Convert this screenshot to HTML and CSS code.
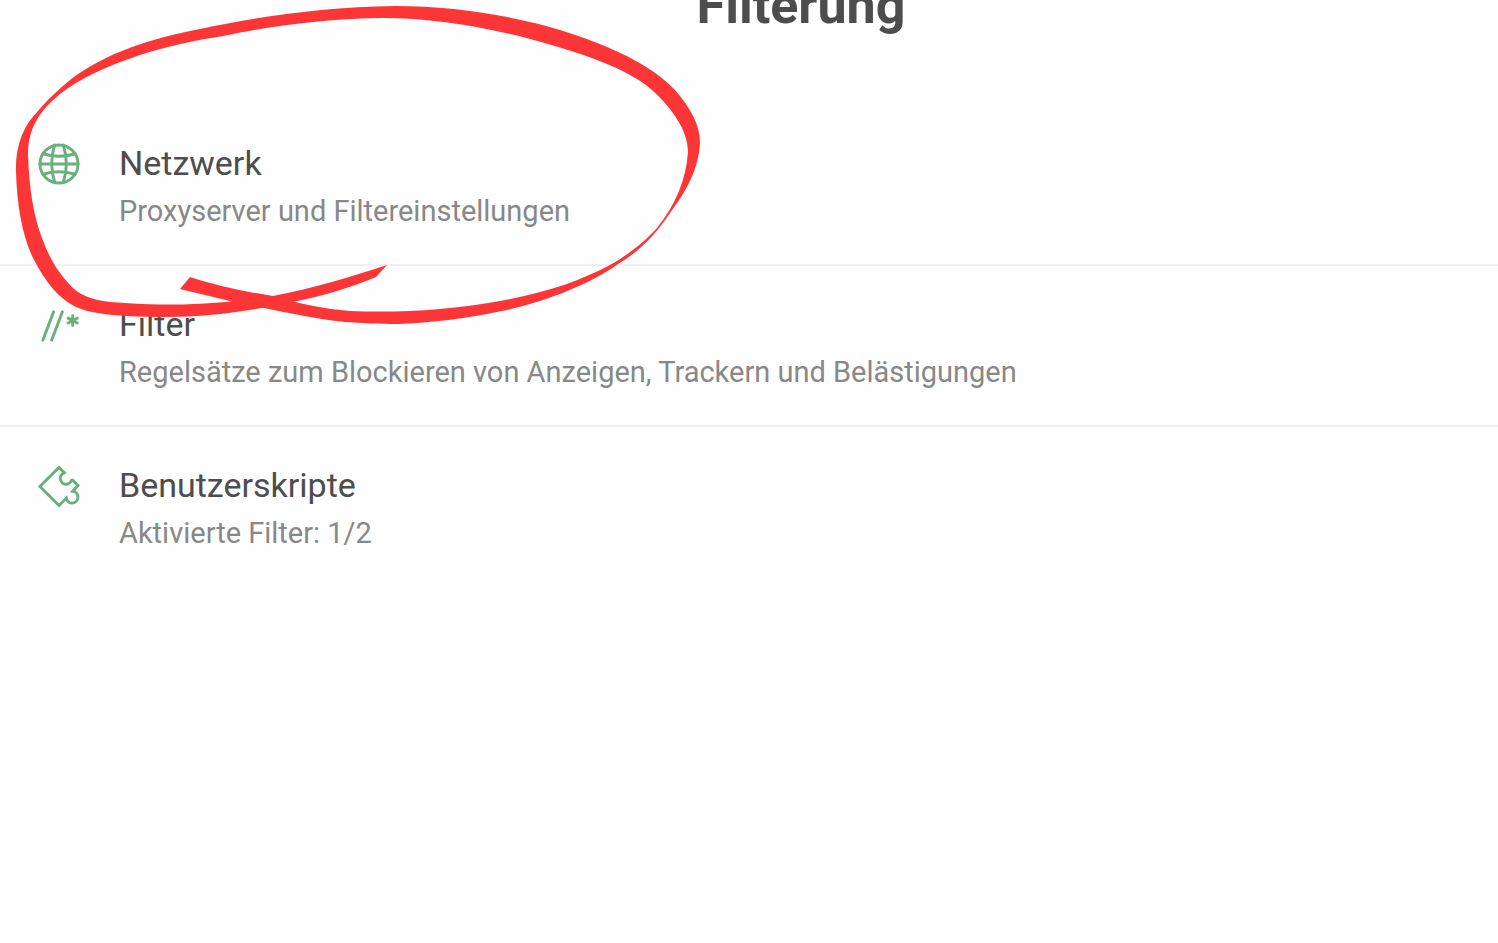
FILE: index.html
```html
<!DOCTYPE html>
<html lang="de">
<head>
    <meta charset="UTF-8">
    <meta name="viewport" content="width=device-width, initial-scale=1.0">
    <title>Filterung</title>
    <link rel="stylesheet" href="styles.css">
</head>
<body>
<header class="header">
    <h1>Filterung</h1>
</header>

<main>
    <ul class="settings">
        <li>
            <a class="setting" href="#netzwerk">
                <svg class="icon" viewBox="0 0 43 43" aria-hidden="true">
                    <circle cx="21.500" cy="21.500" r="19.500"/>
                    <path d="M2 21.500H41M5 11Q21.500 16 38 11M5 32Q21.500 27 38 32M17 2Q11 21.500 17 40M26 2Q32 21.500 26 40"/>
                </svg>
                <div class="setting-info">
                    <h2>Netzwerk</h2>
                    <p>Proxyserver und Filtereinstellungen</p>
                </div>
            </a>
        </li>
        <li>
            <a class="setting" href="#filter">
                <svg class="icon" viewBox="0 0 43 43" aria-hidden="true">
                    <path d="M16 8L5 37M25 8L14 37M35.500 12V22M30.800 14.500L40.200 19.500M40.200 14.500L30.800 19.500"/>
                </svg>
                <div class="setting-info">
                    <h2>Filter</h2>
                    <p>Regelsätze zum Blockieren von Anzeigen, Trackern und Belästigungen</p>
                </div>
            </a>
        </li>
        <li>
            <a class="setting" href="#benutzerskripte">
                <svg class="icon" viewBox="0 0 43 43" aria-hidden="true">
                    <path d="M21.500 2.500L27 8L24.500 9.500A6 6 0 1 0 34.500 15.500L35.500 15.500L41 21L35.500 27A6 6 0 1 1 29 34L21.500 41.500L2 22Z"/>
                </svg>
                <div class="setting-info">
                    <h2>Benutzerskripte</h2>
                    <p>Aktivierte Filter: 1/2</p>
                </div>
            </a>
        </li>
    </ul>
</main>

<!-- Markierung -->
<svg class="marker" viewBox="0 0 720 340" aria-hidden="true">
    <path d="M190 277C215 285 240 291 273 296C300 304 325 309 350 311C400 313 450 310 500 301
        C545 293 580 281 610 265C630 254 646 240 657 228C676 204 686 180 688 152
        C688 132 674 110 652 90C628 68 575 51 530 39C480 26 430 18 383 18
        C330 18 270 26 223 36C195 40 165 47 140 55C110 65 80 78 60 94
        C38 112 28 130 28 155C29 185 33 215 42 238C50 260 60 275 72 287
        C85 300 105 302 125 303C185 307 230 303 273 296C315 288 350 277 387 265
        L376 277C345 290 320 296 293 302C250 311 210 317 167 317
        C140 317 110 316 92 312C60 306 45 280 33 258C22 235 17 205 16 172
        C15 145 24 125 38 111C48 99 57 91 70 80C105 53 152 38 200 29
        C250 18 320 7 395 6C475 6 555 24 607 47C636 59 660 74 675 90
        C690 107 700 125 700 142C699 170 685 193 670 213C656 234 640 251 618 264
        C590 284 550 300 507 310C470 318 430 323 397 324C380 324 360 323 345 322
        C315 319 290 313 264 308C235 303 210 296 180 289Z"/>
</svg>
</body>
</html>
```
FILE: styles.css
```css
* {
    box-sizing: border-box;
}
body {
    position: relative;
    font-family: Roboto, Arial, sans-serif;
    background-color: #fefefe;
    color: #4d4d4d;
    margin: 0;
}
.header {
    display: flex;
    justify-content: center;
    align-items: flex-end;
    height: 105px;
    padding: 0 0 67px 104px;
    overflow: hidden;
}
h1 {
    margin: 0;
    font-size: 52px;
    line-height: 64px;
}
.settings {
    list-style: none;
    margin: 0;
    padding: 0;
}
.settings li + li {
    border-top: 2px solid #f0f0f0;
}
.setting {
    display: flex;
    align-items: flex-start;
    gap: 39px;
    padding: 38px;
    padding-bottom: 33px;
    color: inherit;
    text-decoration: none;
}
.icon {
    flex: none;
    width: 42px;
    height: 42px;
    fill: none;
    stroke: #6ab07d;
    stroke-width: 3;
    stroke-linecap: round;
    overflow: visible;
}
.setting h2 {
    margin: 0 0 8px;
    font-size: 34px;
    font-weight: 400;
    line-height: 40px;
}
.setting p {
    margin: 0;
    font-size: 29px;
    line-height: 40px;
    color: #888;
}
.marker {
    position: absolute;
    top: 0;
    left: 0;
    width: 720px;
    height: 340px;
    fill: #fc3636;
    pointer-events: none;
}
```
